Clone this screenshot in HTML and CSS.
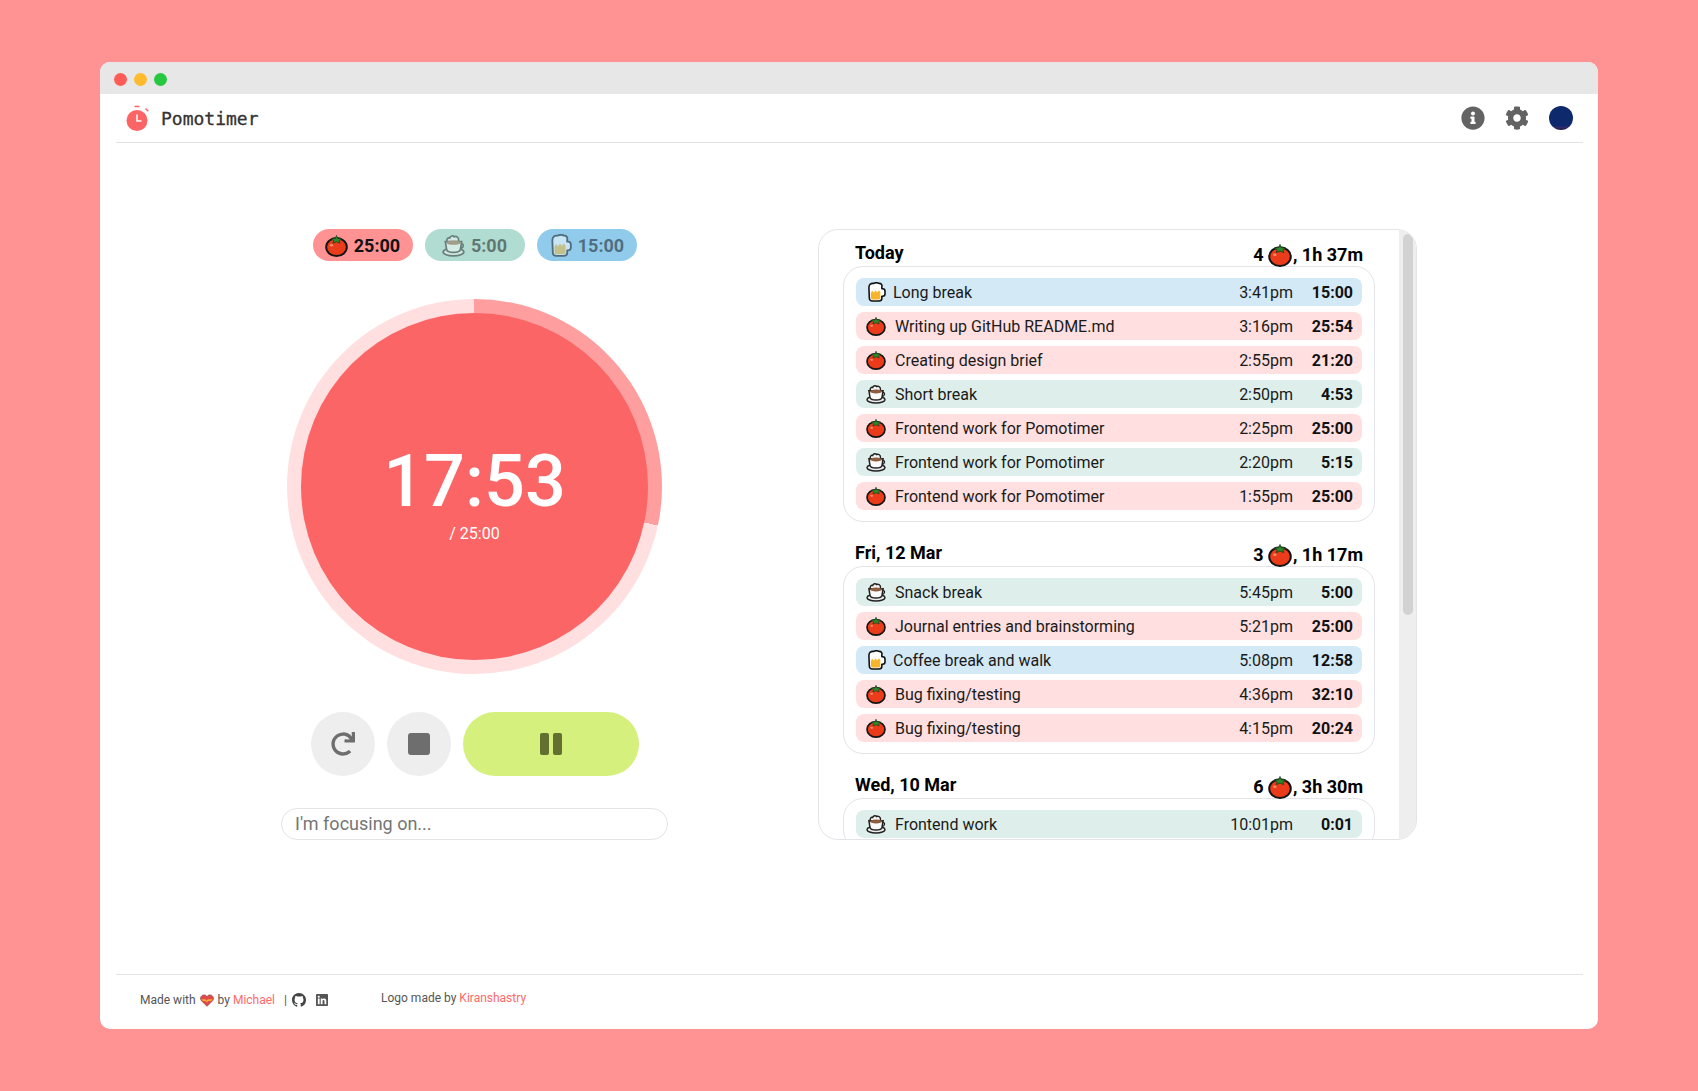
FILE: index.html
```html
<!DOCTYPE html>
<html lang="en">
<head>
<meta charset="utf-8">
<title>Pomotimer</title>
<link rel="stylesheet" href="styles.css">
</head>
<body>
<svg class="defs" aria-hidden="true">
  <symbol id="tomato" viewBox="0 0 24 24">
    <ellipse cx="12" cy="13.600" rx="10.800" ry="9.400" fill="#ea3b1a" stroke="#141414" stroke-width="2"/>
    <ellipse cx="6.800" cy="11.800" rx="1.800" ry="1.300" fill="#f58a6c"/>
    <path d="M12 1.500 13.200 4.600 17.500 5 14.800 7 15.800 9.600 12 8.200 8.200 9.600 9.200 7 6.500 5 10.800 4.600Z" fill="#2c8a2c" stroke="#1b3f1b" stroke-width=".8" stroke-linejoin="round"/>
  </symbol>
  <symbol id="cup" viewBox="0 0 24 24">
    <path d="M5.500 8.500C3.800 5.500 6.500 3.500 8 4.200 8.800 1.600 11.800 1.500 12.800 3 14.800 1.800 17.800 3.800 17.300 6.500" fill="#f5f5f5" stroke="#222" stroke-width="1.800" stroke-linecap="round"/>
    <path d="M20 10c3.200 0 3 4.500-1 5" fill="none" stroke="#222" stroke-width="1.600"/>
    <ellipse cx="12" cy="18.800" rx="10.800" ry="4" fill="#ececec" stroke="#222" stroke-width="1.800"/>
    <path d="M3.500 8h17l-1.300 8c-.5 2.200-3.700 3.200-7.200 3.200s-6.700-1-7.200-3.200Z" fill="#fafafa" stroke="#222" stroke-width="1.800"/>
    <ellipse cx="12" cy="9" rx="7.400" ry="2.300" fill="#8e5d3f"/>
  </symbol>
  <symbol id="beer" viewBox="0 0 24 24">
    <path d="M3.500 6.500C3.500 3 6 1.200 9 1.700 11 .8 14 .8 15.500 1.700 18 1.400 19.700 3.500 19 6V8H20C22 8 22.800 9.500 22.800 11V14C22.800 16 21.500 17 20 17H19V19.500C19 21.500 17.500 22.800 15.500 22.800H7.500C5.500 22.800 4 21.500 4 19.500Z" fill="#fff" stroke="#111" stroke-width="1.900" stroke-linejoin="round"/>
    <path d="M5.800 13 7.500 10.500 9.500 13 11.500 10 13.500 12.500 15.500 10 17.200 12V19C17.200 20.200 16.400 21 15.300 21H7.700C6.600 21 5.800 20.200 5.800 19Z" fill="#f6b52b"/>
  </symbol>
  <symbol id="github" viewBox="0 0 16 16">
    <path d="M8 0C3.580 0 0 3.580 0 8c0 3.540 2.290 6.530 5.470 7.590.4.070.55-.17.55-.38 0-.19-.01-.82-.01-1.490-2.010.37-2.530-.49-2.690-.94-.09-.23-.48-.94-.82-1.130-.28-.15-.68-.52-.01-.53.63-.01 1.080.58 1.230.82.72 1.210 1.870.87 2.330.66.07-.52.28-.87.51-1.070-1.780-.2-3.640-.89-3.640-3.950 0-.87.31-1.590.82-2.150-.08-.2-.36-1.020.08-2.120 0 0 .67-.21 2.200.82.64-.18 1.320-.27 2-.27.68 0 1.360.09 2 .27 1.530-1.040 2.200-.82 2.200-.82.44 1.100.16 1.920.08 2.120.51.56.82 1.270.82 2.150 0 3.070-1.870 3.750-3.650 3.950.29.25.54.73.54 1.480 0 1.070-.01 1.930-.01 2.200 0 .21.15.46.55.38A8.013 8.013 0 0016 8c0-4.420-3.580-8-8-8z"/>
  </symbol>
</svg>

<div class="window">
  <div class="titlebar">
    <span class="dot dot-red"></span>
    <span class="dot dot-amber"></span>
    <span class="dot dot-green"></span>
  </div>

  <header class="header">
    <div class="brand">
      <svg class="brand-icon" viewBox="0 0 26 28">
        <circle cx="12" cy="16.500" r="10.500" fill="#fb6565"/>
        <path d="M9.500 2.500h5" stroke="#fb6565" stroke-width="1.400" fill="none"/>
        <path d="M20.500 4.500l2.800 2.800" stroke="#fb6565" stroke-width="1.400" fill="none"/>
        <path d="M12 10.500v6.500h4.500" stroke="#fff" stroke-width="1.500" fill="none"/>
      </svg>
      <span class="brand-name">Pomotimer</span>
    </div>
    <nav class="tools">
      <svg class="tool" viewBox="0 0 512 512"><path d="M256 8C119.043 8 8 119.083 8 256c0 136.997 111.043 248 248 248s248-111.003 248-248C504 119.083 392.957 8 256 8zm0 110c23.196 0 42 18.804 42 42s-18.804 42-42 42-42-18.804-42-42 18.804-42 42-42zm56 254c0 6.627-5.373 12-12 12h-88c-6.627 0-12-5.373-12-12v-24c0-6.627 5.373-12 12-12h12v-64h-12c-6.627 0-12-5.373-12-12v-24c0-6.627 5.373-12 12-12h64c6.627 0 12 5.373 12 12v100h12c6.627 0 12 5.373 12 12v24z"/></svg>
      <svg class="tool" viewBox="0 0 512 512"><path d="M487.400 315.700l-42.600-24.600c4.300-23.200 4.300-47 0-70.200l42.600-24.600c4.900-2.800 7.100-8.600 5.500-14-11.100-35.600-30-67.800-54.700-94.600-3.800-4.100-10-5.100-14.800-2.300L380.800 110c-17.900-15.400-38.500-27.300-60.800-35.100V25.800c0-5.600-3.900-10.500-9.400-11.700-36.700-8.200-74.300-7.800-109.200 0-5.500 1.200-9.400 6.100-9.400 11.700V75c-22.200 7.900-42.800 19.800-60.800 35.100L88.700 85.500c-4.900-2.800-11-1.900-14.800 2.300-24.700 26.700-43.600 58.900-54.700 94.600-1.700 5.400.6 11.200 5.500 14L67.300 221c-4.300 23.200-4.300 47 0 70.200l-42.600 24.600c-4.900 2.800-7.100 8.600-5.500 14 11.100 35.600 30 67.800 54.700 94.600 3.800 4.100 10 5.100 14.800 2.300l42.600-24.600c17.900 15.400 38.500 27.300 60.800 35.100v49.200c0 5.600 3.900 10.500 9.400 11.700 36.700 8.200 74.300 7.800 109.200 0 5.500-1.200 9.400-6.100 9.400-11.700v-49.200c22.200-7.900 42.800-19.800 60.800-35.100l42.600 24.600c4.900 2.800 11 1.900 14.800-2.300 24.700-26.700 43.600-58.900 54.700-94.600 1.500-5.500-.7-11.300-5.600-14.100zM256 336c-44.100 0-80-35.900-80-80s35.900-80 80-80 80 35.900 80 80-35.900 80-80 80z"/></svg>
      <span class="avatar"></span>
    </nav>
  </header>

  <main class="main">
    <section class="timer-col">
      <div class="pills">
        <div class="pill pill-work"><span class="pill-in"><svg class="pill-icon"><use href="#tomato"/></svg>25:00</span></div>
        <div class="pill pill-short"><span class="pill-in dim"><svg class="pill-icon"><use href="#cup"/></svg>5:00</span></div>
        <div class="pill pill-long"><span class="pill-in dim"><svg class="pill-icon"><use href="#beer"/></svg>15:00</span></div>
      </div>
      <div class="ring">
        <div class="disc">
          <div class="clock">17:53</div>
          <div class="total">/ 25:00</div>
        </div>
      </div>
      <div class="controls">
        <button class="ctl ctl-round"><svg class="redo" viewBox="0 0 512 512"><path d="M500.330 0h-47.410a12 12 0 0 0-12 12.570l4 82.760A247.420 247.420 0 0 0 256 8C119.340 8 7.900 119.530 8 256.190 8.100 393.070 119.100 504 256 504a247.100 247.100 0 0 0 166.180-63.910 12 12 0 0 0 .48-17.430l-34-34a12 12 0 0 0-16.380-.55A176 176 0 1 1 402.100 157.800l-101.530-4.870a12 12 0 0 0-12.570 12v47.410a12 12 0 0 0 12 12h200.330a12 12 0 0 0 12-12V12a12 12 0 0 0-12-12z"/></svg></button>
        <button class="ctl ctl-round"><span class="stop"></span></button>
        <button class="ctl ctl-pause"><span class="bar"></span><span class="bar"></span></button>
      </div>
      <input class="focus" type="text" placeholder="I'm focusing on...">
    </section>

    <section class="log">
      <div class="log-list">
        <div class="day">
          <div class="day-head"><span class="day-name">Today</span><span class="day-sum">4 <svg class="sum-icon"><use href="#tomato"/></svg>, 1h 37m</span></div>
          <div class="group">
            <div class="row row-long"><svg class="row-icon beer"><use href="#beer"/></svg><span class="name">Long break</span><span class="time">3:41pm</span><span class="dur">15:00</span></div>
            <div class="row row-work"><svg class="row-icon"><use href="#tomato"/></svg><span class="name">Writing up GitHub README.md</span><span class="time">3:16pm</span><span class="dur">25:54</span></div>
            <div class="row row-work"><svg class="row-icon"><use href="#tomato"/></svg><span class="name">Creating design brief</span><span class="time">2:55pm</span><span class="dur">21:20</span></div>
            <div class="row row-short"><svg class="row-icon"><use href="#cup"/></svg><span class="name">Short break</span><span class="time">2:50pm</span><span class="dur">4:53</span></div>
            <div class="row row-work"><svg class="row-icon"><use href="#tomato"/></svg><span class="name">Frontend work for Pomotimer</span><span class="time">2:25pm</span><span class="dur">25:00</span></div>
            <div class="row row-short"><svg class="row-icon"><use href="#cup"/></svg><span class="name">Frontend work for Pomotimer</span><span class="time">2:20pm</span><span class="dur">5:15</span></div>
            <div class="row row-work"><svg class="row-icon"><use href="#tomato"/></svg><span class="name">Frontend work for Pomotimer</span><span class="time">1:55pm</span><span class="dur">25:00</span></div>
          </div>
        </div>
        <div class="day">
          <div class="day-head"><span class="day-name">Fri, 12 Mar</span><span class="day-sum">3 <svg class="sum-icon"><use href="#tomato"/></svg>, 1h 17m</span></div>
          <div class="group">
            <div class="row row-short"><svg class="row-icon"><use href="#cup"/></svg><span class="name">Snack break</span><span class="time">5:45pm</span><span class="dur">5:00</span></div>
            <div class="row row-work"><svg class="row-icon"><use href="#tomato"/></svg><span class="name">Journal entries and brainstorming</span><span class="time">5:21pm</span><span class="dur">25:00</span></div>
            <div class="row row-long"><svg class="row-icon beer"><use href="#beer"/></svg><span class="name">Coffee break and walk</span><span class="time">5:08pm</span><span class="dur">12:58</span></div>
            <div class="row row-work"><svg class="row-icon"><use href="#tomato"/></svg><span class="name">Bug fixing/testing</span><span class="time">4:36pm</span><span class="dur">32:10</span></div>
            <div class="row row-work"><svg class="row-icon"><use href="#tomato"/></svg><span class="name">Bug fixing/testing</span><span class="time">4:15pm</span><span class="dur">20:24</span></div>
          </div>
        </div>
        <div class="day">
          <div class="day-head"><span class="day-name">Wed, 10 Mar</span><span class="day-sum">6 <svg class="sum-icon"><use href="#tomato"/></svg>, 3h 30m</span></div>
          <div class="group">
            <div class="row row-short"><svg class="row-icon"><use href="#cup"/></svg><span class="name">Frontend work</span><span class="time">10:01pm</span><span class="dur">0:01</span></div>
          </div>
        </div>
      </div>
      <div class="rail"><div class="thumb"></div></div>
    </section>
  </main>

  <footer class="footer">
    <div class="credit">
      <span>Made with</span>
      <svg class="heart" viewBox="0 0 24 22"><path d="M12 21 2.500 11.500C-.5 8 1 2 6.500 1.500 9 1.300 11 2.500 12 4.500c1-2 3-3.200 5.500-3 5.500.5 7 6.500 4 10Z" fill="#e5484d" stroke="#7a4a3c" stroke-width="1.200"/><path d="M2 9h7l2 2 3-2h8l-3 3h-5l-2 2-3-2H5Z" fill="#f2b02e"/></svg>
      <span>by <a class="link" href="#">Michael</a></span>
      <span class="sep">|</span>
      <svg class="gh"><use href="#github"/></svg>
      <svg class="li" viewBox="0 0 448 512"><path d="M416 32H31.900C14.300 32 0 46.500 0 64.300v383.400C0 465.500 14.300 480 31.900 480H416c17.600 0 32-14.500 32-32.300V64.300c0-17.800-14.400-32.300-32-32.300zM135.400 416H69V202.200h66.500V416zm-33.200-243c-21.300 0-38.500-17.300-38.500-38.500S80.900 96 102.200 96c21.200 0 38.500 17.300 38.500 38.500 0 21.300-17.200 38.500-38.500 38.500zm282.100 243h-66.400V312c0-24.800-.5-56.700-34.500-56.700-34.600 0-39.900 27-39.900 54.900V416h-66.400V202.200h63.700v29.200h.9c8.900-16.800 30.600-34.500 62.900-34.500 67.200 0 79.700 44.300 79.700 101.900V416z"/></svg>
    </div>
    <div class="logo-credit">Logo made by <a class="link" href="#">Kiranshastry</a></div>
  </footer>
</div>
</body>
</html>
```
FILE: styles.css
```css
* { box-sizing: border-box; }
html, body { height: 100%; margin: 0; }
body {
  background: #ff9393;
  padding: 62px 100px;
  font-family: Roboto, "Liberation Sans", sans-serif;
  color: #111;
  overflow: hidden;
}
.defs { display: none; }
.window {
  height: 967px;
  background: #fff;
  border-radius: 10px;
  overflow: hidden;
  display: flex;
  flex-direction: column;
}
.titlebar {
  height: 32px;
  background: #e7e7e7;
  display: flex;
  align-items: center;
  gap: 7px;
  padding: 2px 0 0 14px;
  flex: none;
}
.dot { width: 13px; height: 13px; border-radius: 50%; }
.dot-red { background: #ff5b57; }
.dot-amber { background: #febb2e; }
.dot-green { background: #27c840; }

.header {
  height: 49px;
  margin: 0 15px 0 16px;
  border-bottom: 1px solid #e2e2e2;
  display: flex;
  align-items: center;
  justify-content: space-between;
  flex: none;
}
.brand { display: flex; align-items: center; gap: 10px; padding-left: 9px; }
.brand-icon { width: 26px; height: 28px; display: block; }
.brand-name {
  font-family: "DejaVu Sans Mono", "Liberation Mono", monospace;
  font-size: 18px;
  color: #333;
  -webkit-text-stroke: .3px #333;
}
.tools { display: flex; align-items: center; gap: 20px; padding-right: 10px; }
.tool { width: 24px; height: 24px; fill: #636363; display: block; }
.avatar {
  width: 24px;
  height: 24px;
  border-radius: 50%;
  background: linear-gradient(#0f2a6c 0 82%, #33296a 90%, #1a1a3c 100%);
}

.main {
  flex: 1;
  display: flex;
  justify-content: center;
  align-items: flex-start;
  gap: 150px;
  padding-top: 86px;
}
.timer-col {
  width: 387px;
  display: flex;
  flex-direction: column;
  align-items: center;
}
.pills { display: flex; gap: 12px; margin-bottom: 38px; }
.pill {
  width: 100px;
  height: 32px;
  border-radius: 16px;
  display: flex;
  align-items: center;
  justify-content: center;
  font-size: 18px;
  font-weight: 700;
}
.pill-in { display: flex; align-items: center; gap: 6px; }
.dim { opacity: .5; }
.pill-work { background: #ff9393; }
.pill-short { background: #b0dcd2; }
.pill-long { background: #90cbec; }
.pill-icon { width: 23px; height: 23px; display: block; }

.ring {
  width: 375px;
  height: 375px;
  border-radius: 50%;
  background: conic-gradient(#ff9e9e 0 102deg, #ffdfdf 102deg 360deg);
  display: flex;
  align-items: center;
  justify-content: center;
  margin-bottom: 38px;
}
.disc {
  width: 347px;
  height: 347px;
  border-radius: 50%;
  background: #fb6565;
  color: #fff;
  display: flex;
  flex-direction: column;
  align-items: center;
  justify-content: center;
}
.clock { font-size: 72px; font-weight: 500; line-height: 84px; margin-top: 11px; }
.total { font-size: 16px; line-height: 20px; }

.controls { display: flex; gap: 12px; margin-bottom: 32px; }
.ctl {
  height: 64px;
  border: 0;
  padding: 0;
  border-radius: 32px;
  display: flex;
  align-items: center;
  justify-content: center;
}
.ctl-round { width: 64px; background: #eee; }
.ctl-pause { width: 176px; background: #d6f07e; gap: 4px; }
.redo { width: 24px; height: 24px; fill: #6e6e6e; display: block; }
.stop { width: 22px; height: 22px; background: #6e6e6e; border-radius: 3px; }
.bar { width: 9px; height: 22px; background: #63702f; border-radius: 2px; }

.focus {
  width: 387px;
  height: 32px;
  border: 1px solid #e4e4e8;
  border-radius: 16px;
  padding: 0 13px 2px;
  font: 18px Roboto, sans-serif;
  outline: none;
}
.focus::placeholder { color: #757575; opacity: 1; }

.log {
  width: 599px;
  height: 611px;
  border: 1px solid #e4e4e8;
  border-radius: 20px;
  overflow: hidden;
  display: flex;
  background: #fff;
}
.log-list {
  flex: 1;
  min-width: 0;
  overflow: hidden;
  padding-left: 24px;
}
.rail {
  width: 17px;
  flex: none;
  background: #eee;
  padding: 4px 3px 0 4px;
}
.thumb {
  width: 10px;
  height: 381px;
  background: #d2d2d2;
  border-radius: 5px;
}
.day { width: 532px; }
.day + .day { margin-top: 8px; }
.day-head {
  height: 36px;
  padding: 0 12px;
  display: flex;
  justify-content: space-between;
  align-items: flex-end;
  font-size: 18px;
  font-weight: 700;
  color: #000;
}
.day-name { line-height: 26px; }
.day-sum { display: flex; align-items: center; line-height: 24px; white-space: pre; margin-bottom: -1px; }
.sum-icon { width: 24px; height: 24px; margin-right: 1px; display: block; }
.group {
  border: 1px solid #e4e4e8;
  border-radius: 20px;
  padding: 11px 12px;
  display: flex;
  flex-direction: column;
  gap: 6px;
}
.row {
  height: 28px;
  border-radius: 8px;
  display: flex;
  align-items: center;
  padding: 0 9px 0 10px;
  font-size: 16px;
  color: #1a1a1a;
  flex: none;
}
.row-work { background: #ffdfdf; }
.row-short { background: #deefeb; }
.row-long { background: #d3e9f6; }
.row-icon { width: 20px; height: 20px; margin-right: 9px; display: block; flex: none; }
.row-icon.beer { margin-right: 7px; }
.name { flex: 1; }
.time { width: 80px; text-align: right; }
.dur { width: 60px; text-align: right; font-weight: 700; color: #111; }

.footer {
  height: 55px;
  margin: 0 15px 0 16px;
  border-top: 1px solid #e4e4e4;
  padding-bottom: 4px;
  display: flex;
  align-items: center;
  font-size: 12px;
  color: #555;
  flex: none;
}
.credit { display: flex; align-items: center; margin-left: 24px; width: 241px; }
.credit > span { margin-right: 4px; }
.heart { width: 14px; height: 13px; margin-right: 4px; display: block; }
.sep { margin: 0 5px !important; }
.gh { width: 14px; height: 14px; fill: #444; display: block; margin-right: 10px; }
.li { width: 12px; height: 14px; fill: #555; display: block; }
.logo-credit { margin-top: -4px; }
.link { color: #ff6a6a; text-decoration: none; }
```
